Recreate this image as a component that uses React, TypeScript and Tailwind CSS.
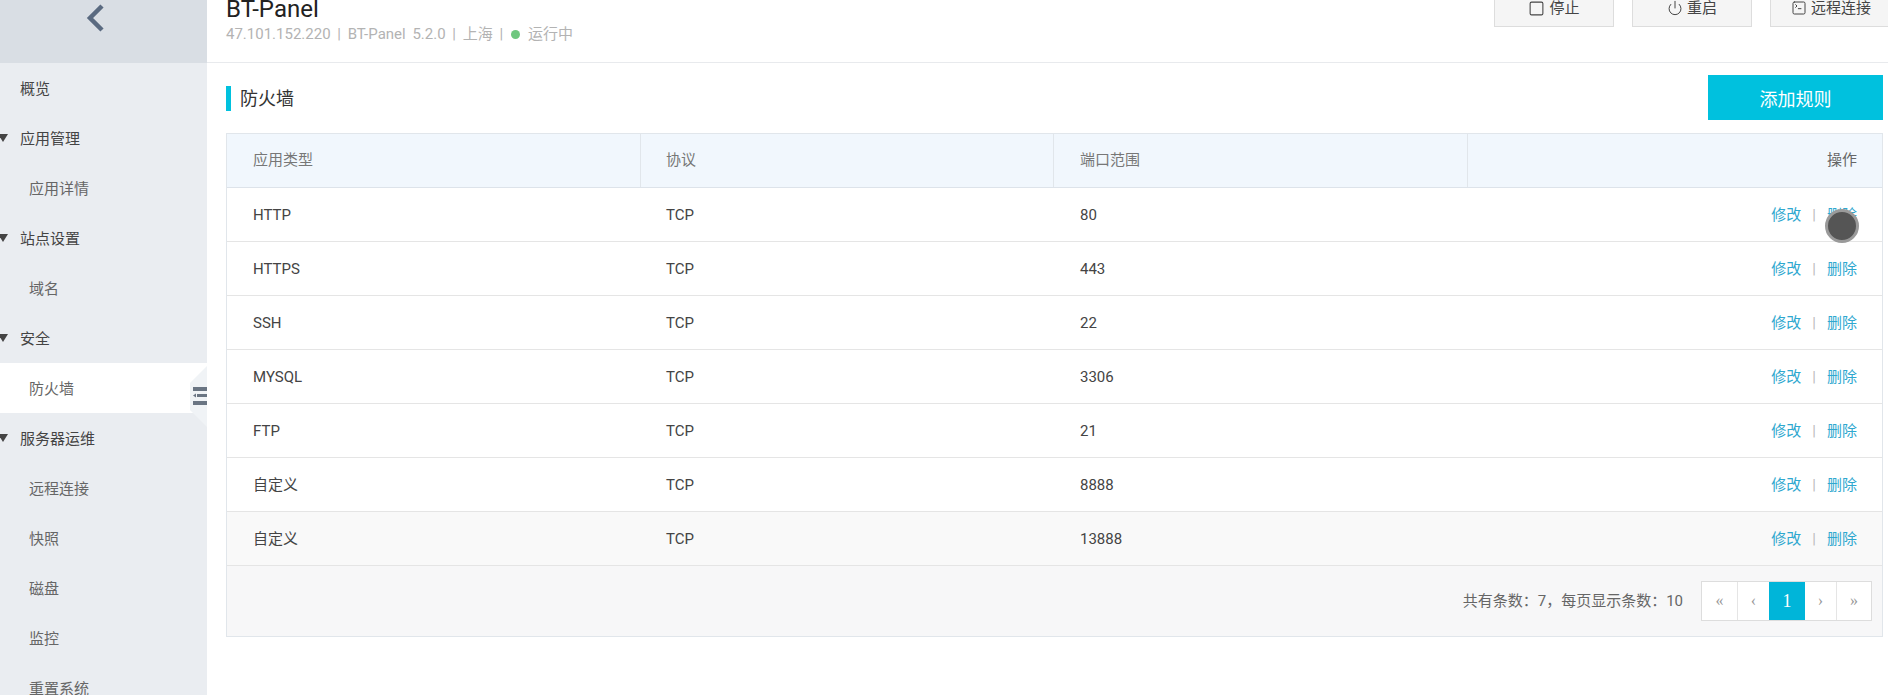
import { Power, Square, SquareTerminal } from 'lucide-react'

const font = "font-['Roboto','Noto_Sans_CJK_SC',sans-serif]"

type MenuItem = {
  label: string
  kind: 'top' | 'group' | 'child'
  active?: boolean
}

const menu: MenuItem[] = [
  { label: '概览', kind: 'top' },
  { label: '应用管理', kind: 'group' },
  { label: '应用详情', kind: 'child' },
  { label: '站点设置', kind: 'group' },
  { label: '域名', kind: 'child' },
  { label: '安全', kind: 'group' },
  { label: '防火墙', kind: 'child', active: true },
  { label: '服务器运维', kind: 'group' },
  { label: '远程连接', kind: 'child' },
  { label: '快照', kind: 'child' },
  { label: '磁盘', kind: 'child' },
  { label: '监控', kind: 'child' },
  { label: '重置系统', kind: 'child' },
]

const rules = [
  { type: 'HTTP', port: '80' },
  { type: 'HTTPS', port: '443' },
  { type: 'SSH', port: '22' },
  { type: 'MYSQL', port: '3306' },
  { type: 'FTP', port: '21' },
  { type: '自定义', port: '8888' },
  { type: '自定义', port: '13888' },
]

function Sidebar() {
  return (
    <aside className="relative h-full w-[207px] shrink-0 overflow-hidden bg-[#eaedf1]">
      <div className="flex h-[63px] items-start bg-[#d9dee4] pl-[84px] pt-[4px]">
        <svg width="22" height="28" viewBox="0 0 22 28" fill="none">
          <path d="M18 2 L6 14 L18 26" stroke="#5a6a80" strokeWidth="4.5" />
        </svg>
      </div>
      {menu.map((item) => (
        <div
          key={item.label}
          className={`relative flex h-[50px] items-center pt-[2px] text-[15px] ${
            item.kind === 'child' ? 'pl-[29px] text-[#666]' : 'pl-[20px] text-[#444]'
          } ${item.active ? 'bg-white' : ''}`}
        >
          {item.kind === 'group' && (
            <span className="absolute left-[-2px] top-[21px] h-0 w-0 border-x-[5px] border-t-[8px] border-x-transparent border-t-[#444]" />
          )}
          {item.label}
        </div>
      ))}
      <div className="absolute left-[190px] top-[366px] h-[61px] w-[17px] bg-[#f0f3f6] [clip-path:polygon(100%_0,100%_100%,0_72%,0_28%)]" />
      <svg width="14" height="18" viewBox="0 0 14 18" className="absolute left-[193px] top-[387px]" fill="#6a7583">
        <rect x="0" y="0" width="14" height="4" />
        <rect x="4" y="7" width="10" height="3" />
        <path d="M0 8.5 L3 6.5 V10.5 Z" />
        <rect x="0" y="14" width="14" height="4" />
      </svg>
    </aside>
  )
}

function HeaderButton({ icon, label, width }: { icon: React.ReactNode; label: string; width: string }) {
  return (
    <div className={`mt-[-11px] flex h-[38px] items-center justify-center gap-[4px] border border-[#ddd] bg-[#f5f5f5] text-[15px] text-[#444] ${width}`}>
      {icon}
      {label}
    </div>
  )
}

export default function App() {
  return (
    <div className={`flex h-[695px] w-[1888px] overflow-hidden bg-white ${font}`}>
      <Sidebar />
      <main className="relative min-w-0 flex-1">
        <header className="flex h-[63px] justify-between overflow-hidden border-b border-[#e8eaed] pl-[19px]">
          <div>
            <div className="mt-[-6px] text-[24px] leading-[30px] text-[#222]">BT-Panel</div>
            <div className="flex items-center text-[15px] leading-[20px] text-[#b3b3b3] [word-spacing:3px]">
              47.101.152.220 | BT-Panel 5.2.0 | 上海 |
              <span className="mx-[8px] h-[9px] w-[9px] rounded-full bg-[#6fc77f]" />
              运行中
            </div>
          </div>
          <div className="mr-[-4px] flex gap-[18px]">
            <HeaderButton icon={<Square size={17} strokeWidth={1.5} />} label="停止" width="w-[120px]" />
            <HeaderButton icon={<Power size={16} strokeWidth={1.5} />} label="重启" width="w-[120px]" />
            <HeaderButton icon={<SquareTerminal size={16} strokeWidth={1.5} />} label="远程连接" width="w-[122px]" />
          </div>
        </header>

        <section className="pl-[19px] pr-[5px]">
          <div className="flex h-[70px] items-center justify-between">
            <div className="flex items-center">
              <span className="mr-[9px] h-[25px] w-[5px] bg-[#00c1de]" />
              <span className="text-[18px] text-[#333]">防火墙</span>
            </div>
            <button className="mt-[-1px] h-[45px] w-[175px] bg-[#00c1de] pt-[3px] text-[18px] text-white">添加规则</button>
          </div>

          <div className="border border-[#e1e6eb]">
            <div className="grid h-[54px] grid-cols-[414px_413px_414px_1fr] items-center border-b border-[#dde3ea] bg-[#f1f7fd] text-[15px] text-[#777]">
              <div className="flex h-full items-center border-r border-[#e1e6eb] pl-[26px]">应用类型</div>
              <div className="flex h-full items-center border-r border-[#e1e6eb] pl-[25px]">协议</div>
              <div className="flex h-full items-center border-r border-[#e1e6eb] pl-[26px]">端口范围</div>
              <div className="pr-[25px] text-right text-[#666]">操作</div>
            </div>
            {rules.map((rule, i) => (
              <div
                key={rule.port}
                className={`grid h-[54px] grid-cols-[414px_413px_414px_1fr] items-center border-b border-[#e5e5e5] pt-[2px] text-[15px] text-[#444] ${
                  i === rules.length - 1 ? 'bg-[#f9f9f9]' : ''
                }`}
              >
                <div className="pl-[26px]">{rule.type}</div>
                <div className="pl-[25px]">TCP</div>
                <div className="pl-[26px]">{rule.port}</div>
                <div className="pr-[25px] text-right text-[#2fa8cf]">
                  修改<span className="mx-[11px] text-[#bbb]">|</span>删除
                </div>
              </div>
            ))}
            <div className="flex h-[70px] items-center justify-end gap-[18px] bg-[#f7f7f8] pr-[10px] text-[15px] text-[#666]">
              <span>共有条数：7，每页显示条数：10</span>
              <div className="flex h-[40px] border border-[#ddd] bg-white font-['Liberation_Serif',serif] text-[16px] text-[#999]">
                <span className="flex w-[35px] items-center justify-center">«</span>
                <span className="flex w-[32px] items-center justify-center border-l border-[#e5e5e5]">‹</span>
                <span className="flex w-[36px] items-center justify-center bg-[#00b5d9] text-[18px] text-white">1</span>
                <span className="flex w-[31px] items-center justify-center">›</span>
                <span className="flex w-[35px] items-center justify-center border-l border-[#e5e5e5]">»</span>
              </div>
            </div>
          </div>
        </section>

        {/* click marker from the screen recording */}
        <div className="absolute left-[1618px] top-[209px] h-[34px] w-[34px] rounded-full border-[3px] border-[#9a9a9a] bg-[#555]" />
      </main>
    </div>
  )
}
